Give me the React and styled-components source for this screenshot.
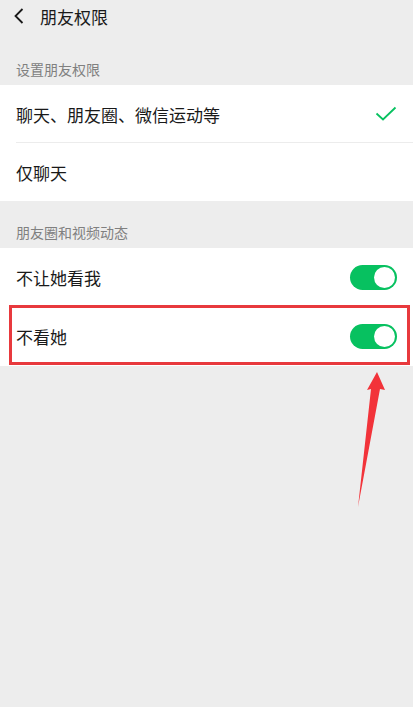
import React from "react";
import styled, { createGlobalStyle } from "styled-components";

const Global = createGlobalStyle`
  html, body { margin: 0; padding: 0; background: #ededed; }
  body { font-family: "Noto Sans CJK SC", "Noto Sans", sans-serif; }
`;

const Page = styled.div`
  position: relative;
  width: 413px;
  height: 707px;
  background: #ededed;
  overflow: hidden;
`;

const Header = styled.div`
  height: 32px;
  display: flex;
  align-items: center;
  padding-left: 13px;
  gap: 15px;
`;

const Title = styled.div`
  font-size: 17px;
  color: #191919;
  line-height: 1;
  font-weight: 400;
`;

const SectionLabel = styled.div`
  height: ${(p) => p.$h}px;
  box-sizing: border-box;
  display: flex;
  align-items: flex-end;
  padding: 0 16px 9px;
  font-size: 14px;
  color: #808080;
  line-height: 1;
`;

const Group = styled.div`
  background: #fff;
`;

const Row = styled.div`
  position: relative;
  height: ${(p) => p.$h || 58}px;
  display: flex;
  align-items: center;
  justify-content: space-between;
  padding: 0 16px;
  font-size: 17px;
  color: #191919;
  ${(p) =>
    p.$divider &&
    `&:after { content: ""; position: absolute; left: 16px; right: 0; bottom: 0; height: 1px; background: #ececec; }`}
`;

const Highlight = styled.div`
  position: absolute;
  left: 9px;
  right: 3px;
  top: -2px;
  bottom: 1px;
  border: 3px solid #e8393d;
  pointer-events: none;
`;

const Toggle = styled.div`
  width: 47px;
  height: 25px;
  border-radius: 13px;
  background: #07c160;
  position: relative;
  &:after {
    content: "";
    position: absolute;
    right: 2px;
    top: 2px;
    width: 21px;
    height: 21px;
    border-radius: 50%;
    background: #fff;
  }
`;

const Arrow = styled.svg`
  position: absolute;
  left: 0;
  top: 0;
  pointer-events: none;
`;

export default function App() {
  return (
    <Page>
      <Global />
      <Header>
        <svg width="12" height="18" viewBox="0 0 12 18">
          <path d="M9.5 2 L2.5 9 L9.5 16" fill="none" stroke="#191919" strokeWidth="1.8" />
        </svg>
        <Title>朋友权限</Title>
      </Header>
      <SectionLabel $h={53}>设置朋友权限</SectionLabel>
      <Group>
        <Row $divider>
          <span>聊天、朋友圈、微信运动等</span>
          <svg width="22" height="16" viewBox="0 0 22 16">
            <path d="M1.5 7.5 L8 13.5 L20.5 1.5" fill="none" stroke="#07c160" strokeWidth="1.8" />
          </svg>
        </Row>
        <Row>
          <span>仅聊天</span>
        </Row>
      </Group>
      <SectionLabel $h={47}>朋友圈和视频动态</SectionLabel>
      <Group>
        <Row $h={59}>
          <span>不让她看我</span>
          <Toggle />
        </Row>
        <Row $h={59}>
          <span>不看她</span>
          <Toggle />
          <Highlight />
        </Row>
      </Group>
      <Arrow width="413" height="707">
        <polygon
          points="377,372 385,390 380,389 358,507 371,389 367,390"
          fill="#f2333a"
        />
      </Arrow>
    </Page>
  );
}
